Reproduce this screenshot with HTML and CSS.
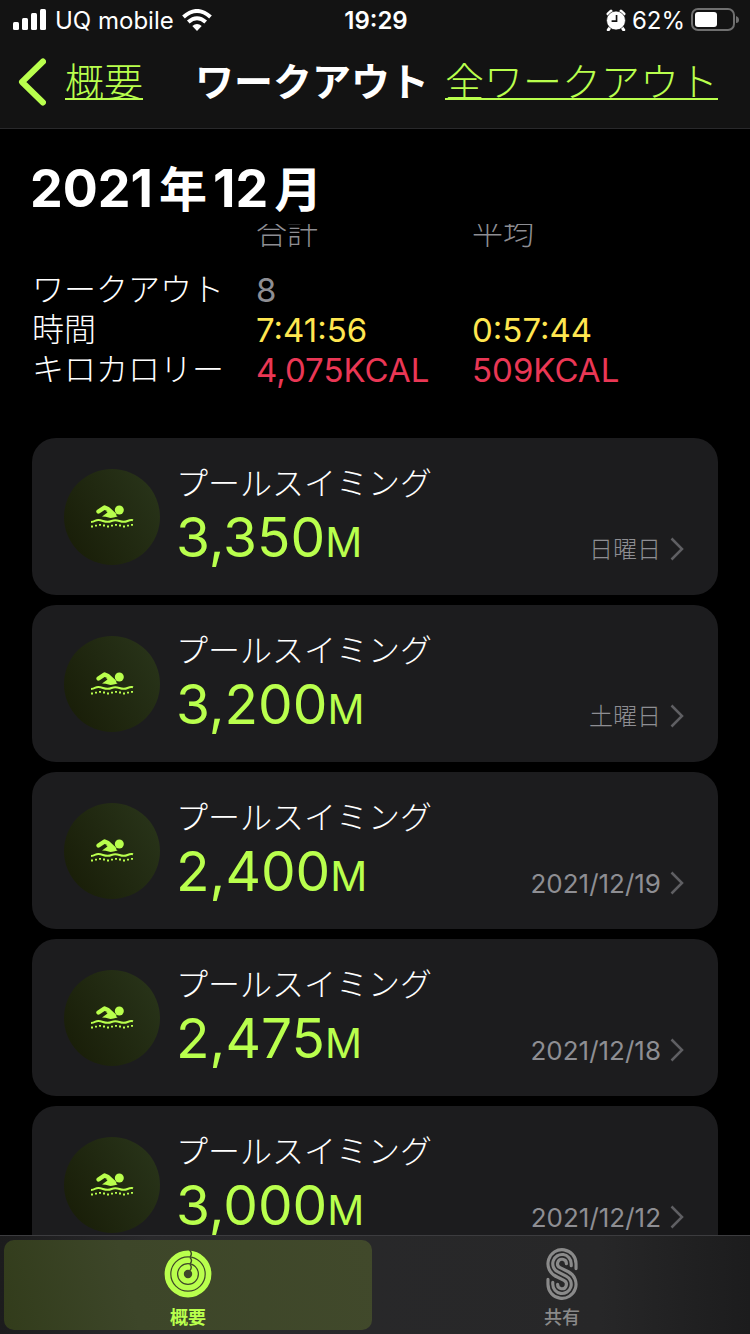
FILE: index.html
```
<!DOCTYPE html>
<html lang="ja">
	<head>
		<meta charset="utf-8">
		<meta name="viewport" content="width=device-width, initial-scale=1">
		<title>ワークアウト</title>
		<link rel="stylesheet" href="styles.css">
	</head>
	<body>
		<svg width="0" height="0" class="defs">
			<symbol id="swim" viewBox="10 14 44 26">
				<path d="M18.5 21.500L24.5 17.5L28 19L34 24.500" fill="none" stroke="currentColor" stroke-width="4.400" stroke-linecap="round" stroke-linejoin="round"/>
				<path d="M22 26.6L27.5 22.6L26 21L32 21.5L37.6 26.6Q31 28.600 28.500 27.600T22 26.600Z" fill="currentColor"/>
				<circle cx="39.300" cy="20" r="4.500" fill="currentColor"/>
				<path d="M11 32Q13 32 15.500 30.700T23 31T31.500 31T39.500 31T47.500 31T53 30.200" fill="none" stroke="currentColor" stroke-width="2"/>
				<path d="M11 36.500h2M15 35.700h2M19 34.800h2M23 35.500h2M27 36.500h2M31 35.700h2M35 34.800h2M39 35.500h2M43 36.500h2M47 35.700h2M51 34.800h2" fill="none" stroke="currentColor" stroke-width="1.800"/>
			</symbol>
			<symbol id="arrow" viewBox="0 0 14 24">
				<path d="M1.500 1.500L12 12L1.500 22.500" fill="none" stroke="currentColor" stroke-width="2.500"/>
			</symbol>
		</svg>

		<header>
			<div class="status">
				<div class="carrier">
					<svg width="34" height="22" viewBox="0 0 34 22" fill="#fff">
						<rect x="0" y="13" width="6" height="8" rx="1.500"/>
						<rect x="9" y="9" width="6" height="12" rx="1.500"/>
						<rect x="18" y="4" width="6" height="17" rx="1.500"/>
						<rect x="27" y="0" width="6" height="21" rx="1.500"/>
					</svg>
					<span>UQ mobile</span>
					<svg width="30" height="22" viewBox="0 0 30 22">
						<g fill="none" stroke="#fff" stroke-width="4">
							<path d="M1.500 8Q15 -4 28.500 8"/>
							<path d="M6.300 13Q15 5.500 23.700 13"/>
						</g>
						<path d="M10.300 17Q15 13 19.700 17L15 22Z" fill="#fff"/>
					</svg>
				</div>
				<time>19:29</time>
				<div class="power">
					<svg width="20" height="22" viewBox="0 0 18 20">
						<path d="M1.800 4.500L4.500 2M16.200 4.500L13.500 2M3.500 17L2 19M14.500 17L16 19" stroke="#fff" stroke-width="2.800" stroke-linecap="round"/>
						<circle cx="9" cy="10.500" r="8.600" fill="#fff" stroke="#131313" stroke-width=".6"/>
						<path d="M9.500 5.500V11H5" fill="none" stroke="#131313" stroke-width="1.500"/>
					</svg>
					<span>62%</span>
					<svg width="48" height="24" viewBox="0 0 48 24">
						<rect x="1" y="1" width="42" height="21" rx="6" fill="none" stroke="#6f6f6f" stroke-width="2"/>
						<rect x="4" y="4" width="22" height="15" rx="3" fill="#fff"/>
						<path d="M45 8Q48 9 48 12T45 15Z" fill="#6f6f6f"/>
					</svg>
				</div>
			</div>
			<nav class="topnav">
				<a href="#" class="back">
					<svg width="28" height="48" viewBox="0 0 28 48"><path d="M25 3.500L4 24L25 44.500" fill="none" stroke="currentColor" stroke-width="6" stroke-linecap="round" stroke-linejoin="round"/></svg>
					<span>概要</span>
				</a>
				<h1>ワークアウト</h1>
				<a href="#">全ワークアウト</a>
			</nav>
		</header>

		<main>
			<h2>2021<span>年</span>12<span>月</span></h2>
			<table>
				<thead>
					<tr><td></td><th scope="col">合計</th><th scope="col">平均</th></tr>
				</thead>
				<tbody>
					<tr><th scope="row">ワークアウト</th><td class="count">8</td><td></td></tr>
					<tr><th scope="row">時間</th><td class="time">7:41:56</td><td class="time">0:57:44</td></tr>
					<tr><th scope="row">キロカロリー</th><td class="kcal">4,075KCAL</td><td class="kcal">509KCAL</td></tr>
				</tbody>
			</table>

			<div class="list">
				<a href="#" class="card">
					<span class="icon"><svg width="44" height="26"><use href="#swim"/></svg></span>
					<span class="info"><span class="name">プールスイミング</span><span class="dist">3,350<small>M</small></span></span>
					<span class="date"><span class="day">日曜日</span><svg width="14" height="24"><use href="#arrow"/></svg></span>
				</a>
				<a href="#" class="card">
					<span class="icon"><svg width="44" height="26"><use href="#swim"/></svg></span>
					<span class="info"><span class="name">プールスイミング</span><span class="dist">3,200<small>M</small></span></span>
					<span class="date"><span class="day">土曜日</span><svg width="14" height="24"><use href="#arrow"/></svg></span>
				</a>
				<a href="#" class="card">
					<span class="icon"><svg width="44" height="26"><use href="#swim"/></svg></span>
					<span class="info"><span class="name">プールスイミング</span><span class="dist">2,400<small>M</small></span></span>
					<span class="date">2021/12/19<svg width="14" height="24"><use href="#arrow"/></svg></span>
				</a>
				<a href="#" class="card">
					<span class="icon"><svg width="44" height="26"><use href="#swim"/></svg></span>
					<span class="info"><span class="name">プールスイミング</span><span class="dist">2,475<small>M</small></span></span>
					<span class="date">2021/12/18<svg width="14" height="24"><use href="#arrow"/></svg></span>
				</a>
				<a href="#" class="card">
					<span class="icon"><svg width="44" height="26"><use href="#swim"/></svg></span>
					<span class="info"><span class="name">プールスイミング</span><span class="dist">3,000<small>M</small></span></span>
					<span class="date">2021/12/12<svg width="14" height="24"><use href="#arrow"/></svg></span>
				</a>
			</div>
		</main>

		<nav class="tabs">
			<button type="button" class="active">
				<svg width="48" height="52" viewBox="0 0 48 52" fill="none">
					<g stroke="currentColor" stroke-width="5.600">
						<circle cx="24" cy="26" r="20.600"/>
						<circle cx="24" cy="26" r="13.800"/>
						<circle cx="24" cy="26" r="7"/>
					</g>
					<path d="M25.500 2Q29 5.500 26 9M26 9.500Q29 12.500 26 16M26 16.500Q28.500 19 26 22.500" stroke="#3d4629" stroke-width="1.400"/>
				</svg>
				<span>概要</span>
			</button>
			<button type="button">
				<svg width="34" height="52" viewBox="0 0 34 53" fill="none" stroke="currentColor" stroke-width="3.200" stroke-linecap="round">
					<path d="M31.300 21V16A14.300 14.300 0 1 0 10.620 28.800"/>
					<path d="M10.620 28.800L19 33A4.500 4.500 0 1 1 12.500 37"/>
					<path d="M26.400 18V16A9.400 9.400 0 1 0 12.810 24.400L21.200 28.600A9.400 9.400 0 1 1 7.600 37V35"/>
					<path d="M21.500 16A4.500 4.500 0 1 0 15 20L23.400 24.200A14.300 14.300 0 1 1 2.700 37V32"/>
				</svg>
				<span>共有</span>
			</button>
		</nav>
	</body>
</html>
```

FILE: styles.css
```
* {
	box-sizing: border-box;
}
body {
	margin: 0;
	height: 100vh;
	display: flex;
	flex-direction: column;
	background: #000;
	color: #fff;
	font-family: Inter, "Noto Sans CJK JP", sans-serif;
}
a {
	color: #b9ff4d;
}
svg {
	flex-shrink: 0;
}
.defs {
	position: absolute;
}
header {
	background: #131313;
	border-bottom: 1px solid #29292b;
}
.status {
	display: grid;
	grid-template-columns: 1fr auto 1fr;
	align-items: center;
	height: 40px;
	padding: 0 11px 0 13px;
	font-size: 24px;
}
.status time {
	font-weight: 600;
}
.carrier, .power {
	display: flex;
	align-items: center;
	gap: 8px;
}
.power {
	justify-content: flex-end;
	gap: 6px;
}
.topnav {
	display: flex;
	align-items: center;
	height: 88px;
	padding: 0 32px 4px 18px;
	font-size: 39px;
	line-height: 48px;
	font-weight: 300;
	white-space: nowrap;
}
.topnav a {
	text-decoration: underline 2px;
	text-underline-offset: 2px;
	text-decoration-skip-ink: none;
}
.topnav .back {
	display: flex;
	align-items: center;
	gap: 19px;
	text-decoration: none;
}
.back span {
	text-decoration: underline 2px;
	text-underline-offset: 2px;
	text-decoration-skip-ink: none;
}
h1 {
	margin: 0 16px 0 auto;
	font-size: 39px;
	font-weight: 700;
}
main {
	flex: 1;
	min-height: 0;
	overflow: hidden;
}
h2 {
	position: relative;
	margin: 0;
	height: 95px;
	padding: 28px 30px 0;
	background: #000;
	font-size: 52px;
	line-height: 64px;
	font-weight: 700;
}
h2 span {
	margin: 0 6px;
	font-size: 48px;
}
/* first row slides under the month heading */
table {
	width: calc(100% - 64px);
	margin: -9px 32px 48px;
	border-collapse: collapse;
	table-layout: fixed;
	font-size: 33px;
	line-height: 40px;
}
th, td {
	height: 40px;
	padding: 0;
	text-align: left;
	vertical-align: middle;
	white-space: nowrap;
}
th {
	font-size: 32px;
	font-weight: 300;
}
thead tr > * {
	height: 55px;
	vertical-align: top;
}
thead th {
	color: #8e8e93;
	font-size: 31px;
	line-height: 36px;
}
thead td {
	width: 224px;
}
thead th:nth-child(2) {
	width: 216px;
}
.count {
	color: #8e8e93;
}
.time {
	color: #ffe650;
}
.kcal {
	color: #ea3755;
}
.list {
	display: flex;
	flex-direction: column;
	gap: 10px;
	padding: 0 32px;
}
.card {
	display: flex;
	height: 157px;
	padding: 26px 34px 24px 32px;
	border-radius: 24px;
	background: #1c1c1e;
	color: #b9ff4d;
	text-decoration: none;
}
.icon {
	display: flex;
	align-items: center;
	justify-content: center;
	width: 96px;
	height: 96px;
	margin-top: 5px;
	border-radius: 50%;
	background: linear-gradient(60deg, #171b06, #2a361b);
}
.info {
	flex: 1;
	display: flex;
	flex-direction: column;
	margin-left: 16px;
}
.name {
	color: #fff;
	font-size: 32px;
	font-weight: 300;
	line-height: 40px;
}
.dist {
	font-size: 55px;
	line-height: 66px;
}
.dist small {
	font-size: 41px;
}
.date {
	display: flex;
	align-items: center;
	align-self: flex-end;
	gap: 9px;
	height: 44px;
	color: #8e8e93;
	font-size: 26px;
}
.day {
	padding-bottom: 4px;
	font-size: 24px;
	font-weight: 300;
}
.date svg {
	color: #5f5f63;
}
.tabs {
	display: flex;
	gap: 6px;
	padding: 4px;
	border-top: 1px solid #3c3c3f;
	background: linear-gradient(90deg, #1c1c1d, #29292b 20%, #272728 80%, #1c1c1d);
}
.tabs button {
	flex: 1;
	display: flex;
	flex-direction: column;
	align-items: center;
	gap: 6px;
	height: 90px;
	padding: 8px 0 0;
	border: 0;
	border-radius: 10px;
	background: none;
	color: #8a8a8a;
	font-family: inherit;
	font-size: 18px;
	line-height: 24px;
	font-weight: 500;
}
.tabs .active {
	background: linear-gradient(75deg, #323c1b, #3d4629 35%, #41492b);
	color: #b9ff4d;
	font-weight: 700;
}
```
